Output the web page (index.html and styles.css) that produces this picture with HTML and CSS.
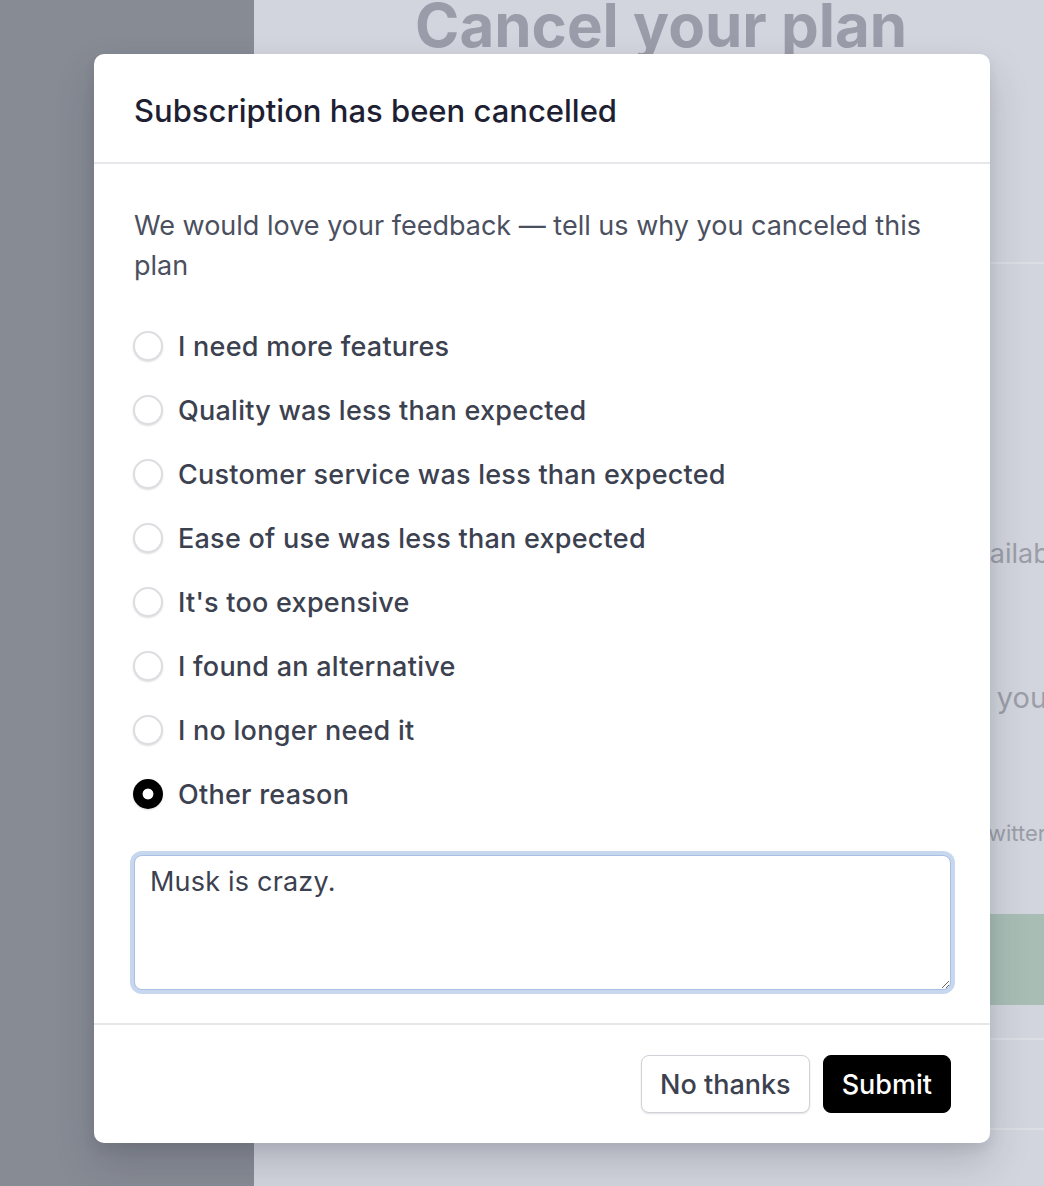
FILE: index.html
```html
<!DOCTYPE html>
<html lang="en">
<head>
<meta charset="utf-8">
<title>Cancel your plan</title>
<link rel="stylesheet" href="styles.css">
</head>
<body>
<div class="page">
  <aside class="sidebar"></aside>
  <main class="main">
    <div class="page-content">
      <h1 class="page-title">Cancel your plan</h1>
      <hr class="bg-rule rule-top">
      <p class="bg-text t1">Some premium features will be unavailable</p>
      <p class="bg-text t2">We are sorry to see your</p>
      <p class="bg-text t3">Follow us on Twitter</p>
      <div class="bg-banner"></div>
      <hr class="bg-rule rule-mid">
      <hr class="bg-rule rule-bottom">
    </div>
  </main>
</div>

<div class="modal" role="dialog" aria-labelledby="modal-title">
  <header class="modal-header">
    <h2 id="modal-title" class="modal-title">Subscription has been cancelled</h2>
  </header>
  <div class="modal-body">
    <p class="lead">We would love your feedback — tell us why you canceled this plan</p>
    <ul class="options">
      <li><label class="option"><input class="radio" type="radio" name="reason"><span>I need more features</span></label></li>
      <li><label class="option"><input class="radio" type="radio" name="reason"><span>Quality was less than expected</span></label></li>
      <li><label class="option"><input class="radio" type="radio" name="reason"><span>Customer service was less than expected</span></label></li>
      <li><label class="option"><input class="radio" type="radio" name="reason"><span>Ease of use was less than expected</span></label></li>
      <li><label class="option"><input class="radio" type="radio" name="reason"><span>It's too expensive</span></label></li>
      <li><label class="option"><input class="radio" type="radio" name="reason"><span>I found an alternative</span></label></li>
      <li><label class="option"><input class="radio" type="radio" name="reason"><span>I no longer need it</span></label></li>
      <li><label class="option"><input class="radio" type="radio" name="reason" checked><span>Other reason</span></label></li>
    </ul>
    <textarea class="reason-text">Musk is crazy.</textarea>
  </div>
  <footer class="modal-footer">
    <button class="btn btn-secondary" type="button">No thanks</button>
    <button class="btn btn-primary" type="button">Submit</button>
  </footer>
</div>
</body>
</html>
```

FILE: styles.css
```css
* { box-sizing: border-box; }

html, body {
  margin: 0;
  width: 1044px;
  height: 1186px;
  overflow: hidden;
}

body {
  font-family: Inter, "Noto Sans", "Liberation Sans", sans-serif;
  background: #d2d5dd;
  color: #3c4150;
}

.page {
  display: flex;
  height: 1186px;
}

.sidebar {
  width: 254px;
  flex: none;
  background: #878b94;
}

.main {
  flex: 1;
  min-width: 0;
}

.page-content {
  margin-left: 76px;
  width: 742px;
  display: flex;
  flex-direction: column;
}

.page-title {
  margin: -5px 0 0 85px;
  font-size: 60px;
  line-height: 60px;
  font-weight: 700;
  letter-spacing: 0;
  color: #9a9ca9;
  white-space: nowrap;
}

.bg-rule {
  margin: 0;
  border: 0;
  height: 2px;
  background: #dcdee4;
}

.rule-top { margin-top: 207px; }

.bg-text {
  margin: 0;
  text-align: right;
  color: #9b9ea8;
  white-space: nowrap;
}

.t1 {
  margin-top: 270px;
  font-size: 27px;
  line-height: 40px;
  padding-right: 0;
}

.t2 {
  margin-top: 104px;
  font-size: 29px;
  line-height: 40px;
  padding-right: 14px;
}

.t3 {
  margin-top: 100px;
  font-size: 22px;
  line-height: 30px;
  padding-right: 26px;
}

.bg-banner {
  margin-top: 66px;
  height: 91px;
  background: #a8beb5;
}

.rule-mid { margin-top: 33px; }
.rule-bottom { margin-top: 88px; }

/* Modal */
.modal {
  position: absolute;
  left: 94px;
  top: 54px;
  width: 896px;
  background: #ffffff;
  border-radius: 10px;
  box-shadow: 0 20px 40px rgba(30, 35, 50, 0.18), 0 6px 12px rgba(30, 35, 50, 0.08);
  display: flex;
  flex-direction: column;
}

.modal-header {
  height: 110px;
  padding: 5px 40px 0;
  display: flex;
  align-items: center;
  border-bottom: 2px solid #e6e7eb;
}

.modal-title {
  margin: 0;
  font-size: 31px;
  font-weight: 500;
  color: #1e1f33;
  letter-spacing: 0;
}

.modal-body {
  padding: 42px 39px 33px 40px;
}

.lead {
  margin: 0;
  font-size: 27px;
  line-height: 40px;
  color: #4b5060;
}

.options {
  list-style: none;
  margin: 40px 0 0;
  padding: 0;
  display: flex;
  flex-direction: column;
  gap: 24px;
}

.option {
  display: flex;
  align-items: center;
  gap: 15px;
  height: 40px;
  font-size: 27px;
  font-weight: 500;
  letter-spacing: 0.25px;
  color: #3c4150;
}

.radio {
  appearance: none;
  -webkit-appearance: none;
  margin: 0 0 0 -1px;
  width: 30px;
  height: 30px;
  flex: none;
  border-radius: 50%;
  border: 2px solid #dcdee2;
  background: #ffffff;
  box-shadow: 0 1px 2px rgba(0, 0, 0, 0.14);
}

.radio:checked {
  border-color: #000000;
  background: radial-gradient(circle, #ffffff 0 5px, #000000 5.8px);
}

.reason-text {
  display: block;
  width: 817px;
  height: 135px;
  margin: 41px 0 0;
  padding: 6px 15px;
  font-family: inherit;
  font-size: 27px;
  line-height: 40px;
  letter-spacing: 0.2px;
  color: #3c4150;
  border: 1.5px solid #a9c0e2;
  border-radius: 8px;
  box-shadow: 0 0 0 4px #c6d7ef;
  outline: none;
}

.modal-footer {
  border-top: 2px solid #e6e7eb;
  padding: 30px 39px 30px 40px;
  display: flex;
  justify-content: flex-end;
  gap: 13px;
}

.btn {
  height: 58px;
  padding: 0 18px;
  font-family: inherit;
  font-size: 27px;
  font-weight: 500;
  border-radius: 8px;
  cursor: pointer;
}

.btn-secondary {
  background: #ffffff;
  color: #3c4150;
  border: 1px solid #cfd2d8;
  box-shadow: 0 1px 2px rgba(0, 0, 0, 0.12);
}

.btn-primary {
  background: #000000;
  color: #ffffff;
  border: 1px solid #000000;
}
```
